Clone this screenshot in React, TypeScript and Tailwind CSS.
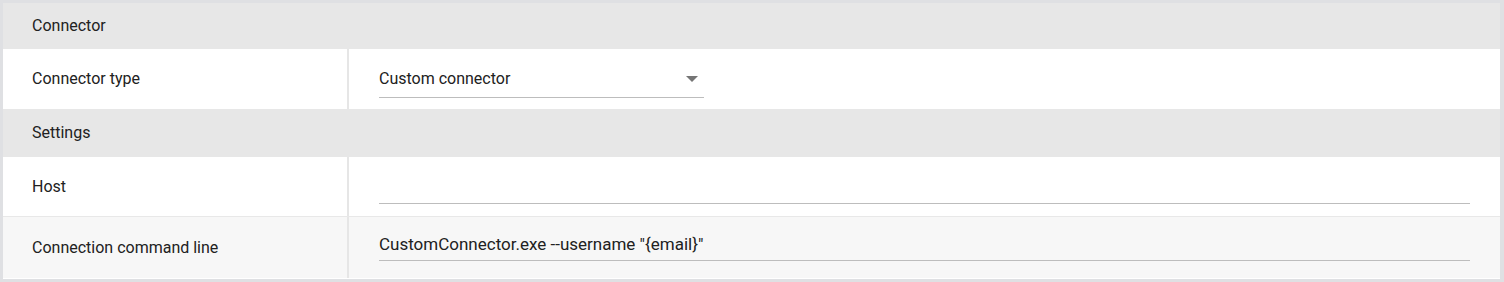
const ROWS_FONT = "font-['Roboto',_'Liberation_Sans',_sans-serif]";

function SectionHeader({ title, height }: { title: string; height: string }) {
  return (
    <div className={`flex items-center bg-[#e7e7e7] pl-[29px] text-[16px] text-[#212121] ${height}`}>
      {title}
    </div>
  );
}

function Row({
  label,
  children,
  shaded = false,
  height,
}: {
  label: string;
  children: React.ReactNode;
  shaded?: boolean;
  height: string;
}) {
  return (
    <div className={`flex ${shaded ? "bg-[#f7f7f7]" : "bg-white"} ${height}`}>
      <div className="flex w-[344px] shrink-0 items-center pl-[29px] text-[16px] text-[#212121]">
        {label}
      </div>
      <div className="w-[2px] shrink-0 bg-[#e6e6e6]" />
      <div className="flex flex-1 items-center pl-[30px] pr-[30px]">{children}</div>
    </div>
  );
}

function Select({ value }: { value: string }) {
  return (
    <div className="flex h-[36px] w-[325px] items-center justify-between border-b border-[#bdbdbd] pb-[4px] pt-[4px] text-[16px] text-[#212121]">
      <span>{value}</span>
      <svg width="12" height="6" viewBox="0 0 12 6" className="mr-[6px]">
        <path d="M0 0h12L6 6z" fill="#757575" />
      </svg>
    </div>
  );
}

function TextField({ value }: { value?: string }) {
  return (
    <div className="flex h-[36px] w-full items-center border-b border-[#bdbdbd] pb-[1px] pt-[6px] text-[17px] text-[#212121]">
      {value}
    </div>
  );
}

export default function App() {
  return (
    <div className={`h-[282px] w-[1504px] bg-white ${ROWS_FONT}`}>
      <div className="flex h-full flex-col border-b-[3px] border-l-[3px] border-r-[4px] border-t-[3px] border-[#dfe0e3]">
        <SectionHeader title="Connector" height="h-[46px]" />
        <Row label="Connector type" height="h-[60px]">
          <div className="mt-[1px]">
            <Select value="Custom connector" />
          </div>
        </Row>
        <SectionHeader title="Settings" height="h-[48px]" />
        <Row label="Host" height="h-[59px]">
          <div className="mt-[34px] w-full">
            <div className="h-[1px] w-full bg-[#bdbdbd]" />
          </div>
        </Row>
        <div className="h-[1px] bg-[#e8e8e8]" />
        <Row label="Connection command line" shaded height="h-[61px]">
          <div className="mt-[-9px] w-full">
            <TextField value={'CustomConnector.exe --username "{email}"'} />
          </div>
        </Row>
      </div>
    </div>
  );
}
